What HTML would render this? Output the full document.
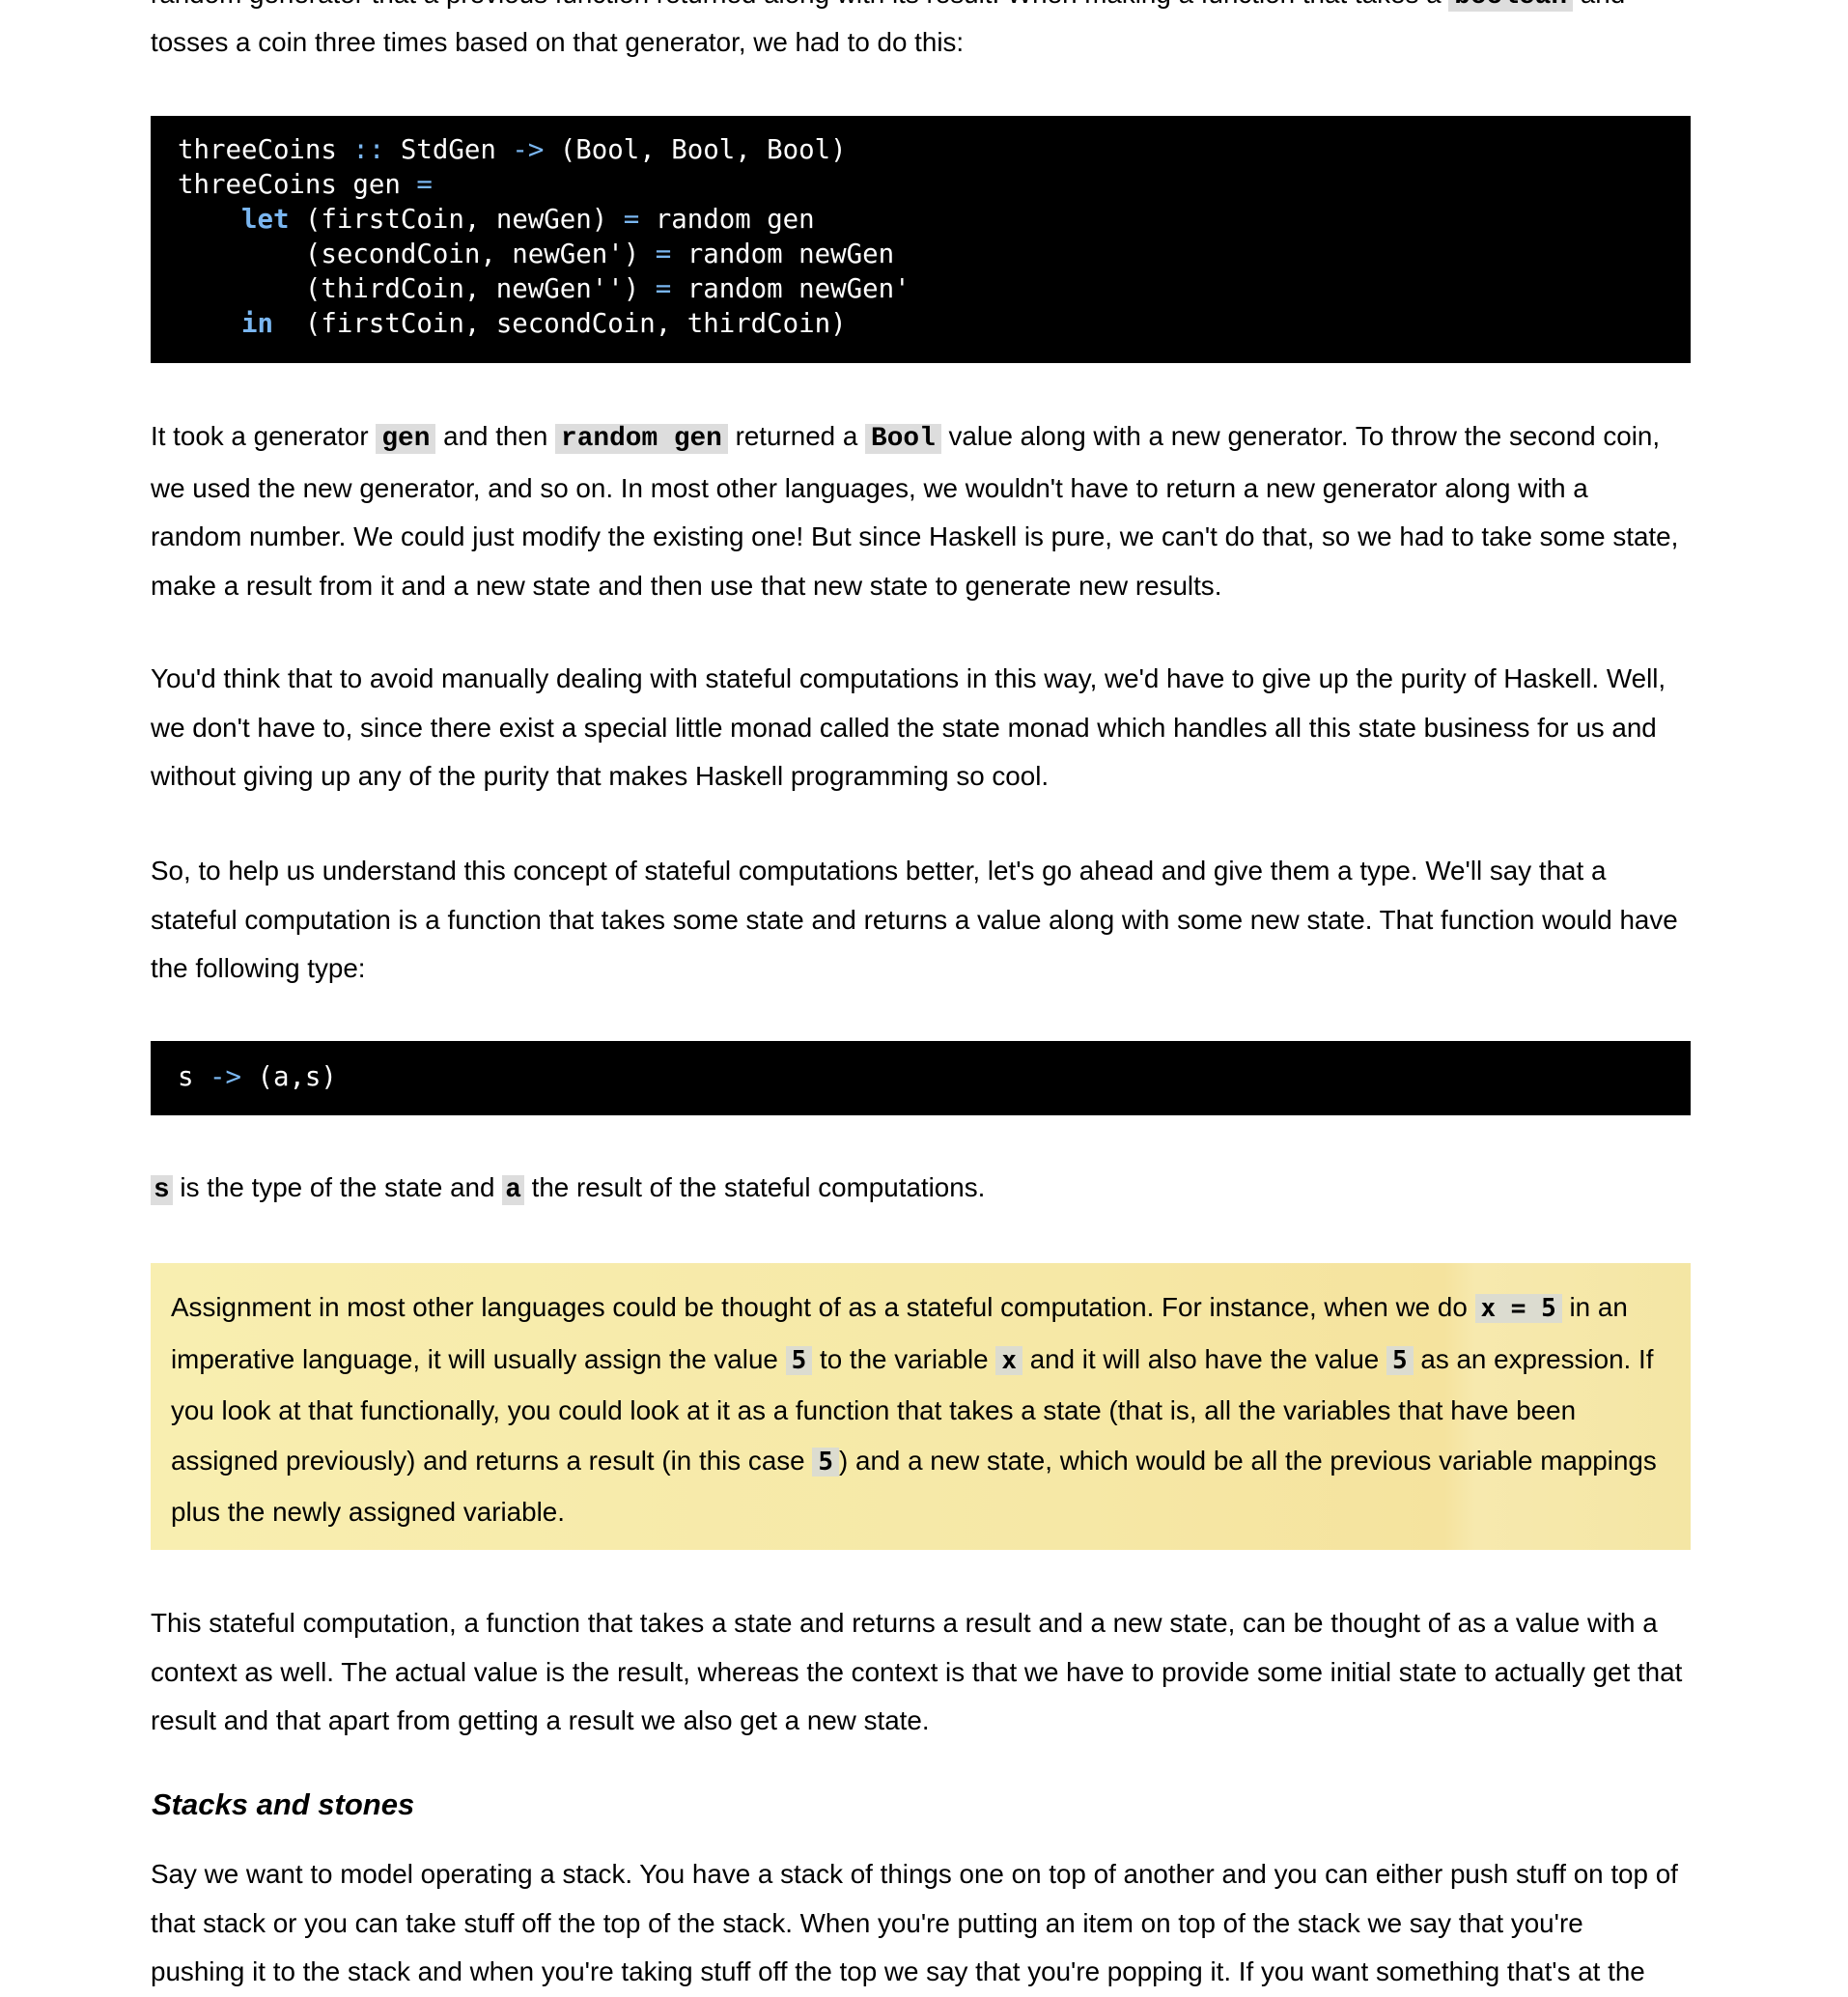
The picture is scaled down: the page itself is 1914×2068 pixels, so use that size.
<!DOCTYPE html>
<html><head><meta charset="utf-8"><style>
body{margin:0;width:1914px;height:2048px;overflow:hidden;background:#fff;position:relative;font-family:"Liberation Sans",Arial,sans-serif;font-size:27.8px;color:#000}
.b{position:absolute;left:156px;width:1588px;line-height:50.5px}
pre{margin:0;position:absolute;left:156px;width:1595px;background:#000;color:#fff;font-family:"DejaVu Sans Mono",monospace;font-size:27.4px;line-height:36px;box-sizing:border-box;padding:0 28px}
.k{color:#7ab6f0}
code{background:#ddd;font-family:"Liberation Mono",monospace;font-weight:bold;padding:0 6px}
.y code{font-family:"DejaVu Sans Mono",monospace;font-size:26px;background:#dcdcd0}
.y{position:absolute;left:156px;width:1595px;top:1308px;height:297px;background:linear-gradient(90deg,#f8eeb0 0%,#f6e8a6 60%,#f5e39e 84%,#f7e9ae 86%,#f4e6a4 100%);box-sizing:border-box;padding:20px 20px 0 21px;line-height:51.5px}
h3{position:absolute;left:157px;top:1851px;margin:0;font-style:italic;font-weight:bold;font-size:31px}
</style></head><body>
<div class="b" style="top:-31px;white-space:nowrap">random generator that a previous function returned along with its result. When making a function that takes a <code>boolean</code> and</div>
<div class="b" style="top:19px">tosses a coin three times based on that generator, we had to do this:</div>
<pre style="top:120px;height:256px;padding-top:18px">threeCoins <span class="k">::</span> StdGen <span class="k">-&gt;</span> (Bool, Bool, Bool)
threeCoins gen <span class="k">=</span>
    <span class="k"><b>let</b></span> (firstCoin, newGen) <span class="k">=</span> random gen
        (secondCoin, newGen') <span class="k">=</span> random newGen
        (thirdCoin, newGen'') <span class="k">=</span> random newGen'
    <span class="k"><b>in</b></span>  (firstCoin, secondCoin, thirdCoin)</pre>
<div class="b" style="top:427px">It took a generator <code>gen</code> and then <code>random gen</code> returned a <code>Bool</code> value along with a new generator. To throw the second coin, we used the new generator, and so on. In most other languages, we wouldn't have to return a new generator along with a random number. We could just modify the existing one! But since Haskell is pure, we can't do that, so we had to take some state, make a result from it and a new state and then use that new state to generate new results.</div>
<div class="b" style="top:678px">You'd think that to avoid manually dealing with stateful computations in this way, we'd have to give up the purity of Haskell. Well, we don't have to, since there exist a special little monad called the state monad which handles all this state business for us and without giving up any of the purity that makes Haskell programming so cool.</div>
<div class="b" style="top:877px">So, to help us understand this concept of stateful computations better, let's go ahead and give them a type. We'll say that a stateful computation is a function that takes some state and returns a value along with some new state. That function would have the following type:</div>
<pre style="top:1078px;height:77px;padding-top:20px">s <span class="k">-&gt;</span> (a,s)</pre>
<div class="b" style="top:1205px"><code style="padding:0 3px">s</code> is the type of the state and <code style="padding:0 3px">a</code> the result of the stateful computations.</div>
<div class="y">Assignment in most other languages could be thought of as a stateful computation. For instance, when we do <code>x = 5</code> in an imperative language, it will usually assign the value <code>5</code> to the variable <code>x</code> and it will also have the value <code>5</code> as an expression. If you look at that functionally, you could look at it as a function that takes a state (that is, all the variables that have been assigned previously) and returns a result (in this case <code>5</code>) and a new state, which would be all the previous variable mappings plus the newly assigned variable.</div>
<div class="b" style="top:1656px">This stateful computation, a function that takes a state and returns a result and a new state, can be thought of as a value with a context as well. The actual value is the result, whereas the context is that we have to provide some initial state to actually get that result and that apart from getting a result we also get a new state.</div>
<h3>Stacks and stones</h3>
<div class="b" style="top:1916px">Say we want to model operating a stack. You have a stack of things one on top of another and you can either push stuff on top of that stack or you can take stuff off the top of the stack. When you're putting an item on top of the stack we say that you're pushing it to the stack and when you're taking stuff off the top we say that you're popping it. If you want something that's at the</div>
</body></html>
